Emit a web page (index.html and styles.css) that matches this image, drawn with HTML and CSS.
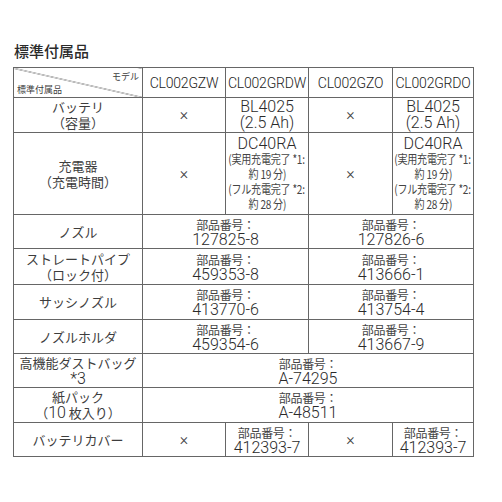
FILE: index.html
```html
<!DOCTYPE html>
<html lang="ja">
<head>
<meta charset="utf-8">
<link rel="stylesheet" href="styles.css">
</head>
<body>
<div class="page">
  <h1 class="title">標準付属品</h1>
  <table class="acc">
    <colgroup>
      <col class="c1"><col class="c2"><col class="c3"><col class="c4"><col class="c5">
    </colgroup>
    <tr class="r-head">
      <th class="corner">
        <span class="corner-top">モデル</span>
        <span class="corner-bottom">標準付属品</span>
      </th>
      <th class="model">CL002GZW</th>
      <th class="model">CL002GRDW</th>
      <th class="model">CL002GZO</th>
      <th class="model">CL002GRDO</th>
    </tr>
    <tr class="r-battery">
      <td class="label">バッテリ<br>（容量）</td>
      <td class="none">×</td>
      <td class="num">BL4025<br>(2.5 Ah)</td>
      <td class="none">×</td>
      <td class="num">BL4025<br>(2.5 Ah)</td>
    </tr>
    <tr class="r-charger">
      <td class="label">充電器<br>（充電時間）</td>
      <td class="none">×</td>
      <td class="charger"><div class="charger-box"><span class="num">DC40RA</span><span class="sub">(実用充電完了 *1:</span><span class="sub">約 19 分)</span><span class="sub">(フル充電完了 *2:</span><span class="sub">約 28 分)</span></div></td>
      <td class="none">×</td>
      <td class="charger"><div class="charger-box"><span class="num">DC40RA</span><span class="sub">(実用充電完了 *1:</span><span class="sub">約 19 分)</span><span class="sub">(フル充電完了 *2:</span><span class="sub">約 28 分)</span></div></td>
    </tr>
    <tr class="r-nozzle">
      <td class="label">ノズル</td>
      <td class="part" colspan="2"><span class="pn">部品番号：</span><span class="num">127825-8</span></td>
      <td class="part" colspan="2"><span class="pn">部品番号：</span><span class="num">127826-6</span></td>
    </tr>
    <tr class="r-pipe">
      <td class="label">ストレートパイプ<br>（ロック付）</td>
      <td class="part" colspan="2"><span class="pn">部品番号：</span><span class="num">459353-8</span></td>
      <td class="part" colspan="2"><span class="pn">部品番号：</span><span class="num">413666-1</span></td>
    </tr>
    <tr class="r-sash">
      <td class="label">サッシノズル</td>
      <td class="part" colspan="2"><span class="pn">部品番号：</span><span class="num">413770-6</span></td>
      <td class="part" colspan="2"><span class="pn">部品番号：</span><span class="num">413754-4</span></td>
    </tr>
    <tr class="r-holder">
      <td class="label">ノズルホルダ</td>
      <td class="part" colspan="2"><span class="pn">部品番号：</span><span class="num">459354-6</span></td>
      <td class="part" colspan="2"><span class="pn">部品番号：</span><span class="num">413667-9</span></td>
    </tr>
    <tr class="r-dust">
      <td class="label">高機能ダストバッグ<br><span class="num">*3</span></td>
      <td class="part" colspan="4"><span class="pn">部品番号：</span><span class="num">A-74295</span></td>
    </tr>
    <tr class="r-paper">
      <td class="label">紙パック<br>（<span class="num">10</span> 枚入り）</td>
      <td class="part" colspan="4"><span class="pn">部品番号：</span><span class="num">A-48511</span></td>
    </tr>
    <tr class="r-cover">
      <td class="label">バッテリカバー</td>
      <td class="none">×</td>
      <td class="part"><span class="pn">部品番号：</span><span class="num">412393-7</span></td>
      <td class="none">×</td>
      <td class="part"><span class="pn">部品番号：</span><span class="num">412393-7</span></td>
    </tr>
  </table>
</div>
</body>
</html>
```

FILE: styles.css
```css
html, body {
  margin: 0;
  padding: 0;
  background: #ffffff;
}

.page {
  padding: 40px 0 0 13px;
  font-family: "Roboto", "Noto Sans CJK JP", sans-serif;
  color: #3a3a3a;
}

.title {
  margin: 0 0 6px 1px;
  font-size: 15px;
  line-height: 21px;
  font-weight: 500;
  color: #2a2a2a;
  font-family: "Noto Sans CJK JP", sans-serif;
}

.acc {
  border-collapse: collapse;
  table-layout: fixed;
  width: 461px;
}

.c1 { width: 129px; }
.c2 { width: 83px; }
.c3 { width: 83px; }
.c4 { width: 84px; }
.c5 { width: 81px; }

.acc th,
.acc td {
  border: 1px solid #666;
  padding: 0;
  text-align: center;
  vertical-align: middle;
  font-weight: 400;
  font-size: 13px;
  line-height: 16px;
  font-family: "Noto Sans CJK JP", sans-serif;
  color: #3d3d3d;
}

.r-head { height: 30px; }
.r-battery { height: 35px; }
.r-charger { height: 82px; }
.r-nozzle { height: 34px; }
.r-pipe { height: 36px; }
.r-sash { height: 35px; }
.r-holder { height: 34px; }
.r-dust { height: 34px; }
.r-paper { height: 35px; }
.r-cover { height: 34px; }

.r-cover td { border-top-color: #222; }

.acc th.corner {
  background: linear-gradient(to top right, transparent calc(50% - 0.6px), #555 50%, transparent calc(50% + 0.6px));
  padding: 1px 3px 1px 3px;
}

.corner-top,
.corner-bottom {
  display: block;
  font-size: 9px;
  line-height: 13px;
}

.corner-top { text-align: right; }
.corner-bottom { text-align: left; }

.acc th.model {
  font-family: "Roboto", sans-serif;
  font-weight: 300;
  font-size: 14px;
  letter-spacing: -0.2px;
  color: #222;
}

.num {
  font-family: "Roboto", sans-serif;
  font-weight: 300;
  font-size: 16px;
  color: #2a2a2a;
}

.acc td.num {
  font-family: "Roboto", sans-serif;
  font-weight: 300;
  font-size: 16px;
  line-height: 16px;
  color: #2a2a2a;
}

.acc td.none {
  font-family: "Roboto", sans-serif;
  font-weight: 300;
  font-size: 16px;
  color: #444;
}

.part .pn,
.part .num {
  display: block;
  line-height: 15px;
}

.pn {
  font-size: 12px;
  letter-spacing: -0.3px;
  color: #444;
}

.charger-box {
  display: flex;
  flex-direction: column;
  align-items: center;
  line-height: 15px;
  white-space: nowrap;
}

.charger .sub {
  font-size: 12px;
  letter-spacing: -0.3px;
  color: #444;
  transform: scaleX(0.84);
}
```
